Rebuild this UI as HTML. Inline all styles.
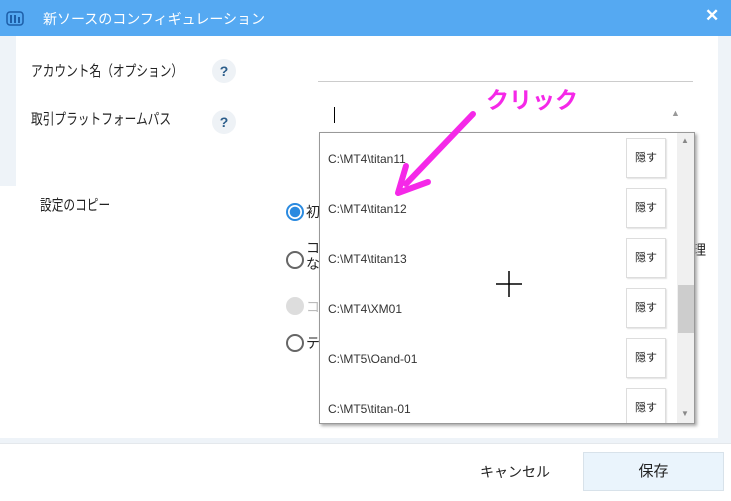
<!DOCTYPE html>
<html><head><meta charset="utf-8"><style>
*{margin:0;padding:0;box-sizing:border-box}
body{width:731px;height:501px;overflow:hidden;background:#eef3f8;font-family:"Liberation Sans","Noto Sans CJK JP",sans-serif;font-size:14px;color:#222;position:relative}
.a{position:absolute}
.title{left:0;top:0;width:731px;height:36px;background:#55a9f2;color:#fff}
.q{width:24px;height:24px;border-radius:12px;background:#eef2f6;color:#2b5d8a;font-weight:bold;font-size:14px;text-align:center;line-height:24px}
.radio{width:18px;height:18px;border-radius:50%;border:2px solid #666;background:#fff}
.item{left:8px;font-size:12px;color:#333}
.btn{left:306px;width:40px;height:40px;border:1px solid #ddd;background:#fff;font-size:11px;text-align:center;line-height:38px;box-shadow:1px 1px 1px #e4e4e4}
.lbl{font-size:15px;transform:scaleX(0.78);transform-origin:left;white-space:nowrap}
</style></head><body>
<div class="a title">
<svg class="a" style="left:6px;top:10px" width="18" height="16"><rect x="1" y="2" width="16" height="13" rx="3" fill="none" stroke="#1d5ea8" stroke-width="1.5"/><path d="M5 5v8M9 5v8M13 7v6" stroke="#1d5ea8" stroke-width="2"/></svg>
<div class="a" style="left:43px;top:9px;font-size:14px">新ソースのコンフィギュレーション</div>
<div class="a" style="left:705px;top:6px;font-size:17px;font-weight:bold">✕</div>
</div>
<div class="a" style="left:16px;top:36px;width:702px;height:150px;background:#fff"></div>
<div class="a" style="left:0;top:186px;width:718px;height:252px;background:#fff"></div>
<div class="a" style="left:0;top:443px;width:731px;height:58px;background:#fff;border-top:1px solid #e4e8ec"></div>
<div class="a lbl" style="left:31px;top:60px">アカウント名（オプション）</div>
<div class="a q" style="left:212px;top:59px">?</div>
<div class="a lbl" style="left:31px;top:108px">取引プラットフォームパス</div>
<div class="a q" style="left:212px;top:110px">?</div>
<div class="a" style="left:318px;top:81px;width:375px;height:1px;background:#ccc"></div>
<div class="a" style="left:334px;top:107px;width:1px;height:16px;background:#000"></div>
<div class="a" style="left:671px;top:108px;font-size:9px;color:#999">▲</div>
<div class="a lbl" style="left:40px;top:194px">設定のコピー</div>
<div class="a radio" style="left:286px;top:203px;border-color:#2a8ae0;background:radial-gradient(circle,#2a8ae0 0 5px,#fff 5.5px)"></div>
<div class="a" style="left:306px;top:202px">初</div>
<div class="a radio" style="left:286px;top:251px"></div>
<div class="a" style="left:306px;top:240px;line-height:16px">コ<br>な</div>
<div class="a radio" style="left:286px;top:297px;border-color:#ddd;background:#ddd"></div>
<div class="a" style="left:306px;top:297px;color:#bbb">コ</div>
<div class="a radio" style="left:286px;top:334px"></div>
<div class="a" style="left:306px;top:333px">テ</div>
<div class="a" style="left:692px;top:240px">理</div>
<div class="a" style="left:319px;top:132px;width:376px;height:292px;background:#fff;border:1px solid #999;box-shadow:2px 2px 3px #aaa;overflow:hidden">
<div class="a item" style="top:19px">C:\MT4\titan11</div>
<div class="a item" style="top:69px">C:\MT4\titan12</div>
<div class="a item" style="top:119px">C:\MT4\titan13</div>
<div class="a item" style="top:169px">C:\MT4\XM01</div>
<div class="a item" style="top:219px">C:\MT5\Oand-01</div>
<div class="a item" style="top:269px">C:\MT5\titan-01</div>
<div class="a btn" style="top:5px">隠す</div>
<div class="a btn" style="top:55px">隠す</div>
<div class="a btn" style="top:105px">隠す</div>
<div class="a btn" style="top:155px">隠す</div>
<div class="a btn" style="top:205px">隠す</div>
<div class="a btn" style="top:255px">隠す</div>
<div class="a" style="left:357px;top:0;width:18px;height:292px;background:#f0f0f0"></div>
<div class="a" style="left:358px;top:152px;width:16px;height:48px;background:#cdcdcd"></div>
<div class="a" style="left:361px;top:3px;font-size:8px;color:#888">▲</div>
<div class="a" style="left:361px;top:276px;font-size:8px;color:#888">▼</div>
<svg class="a" style="left:176px;top:138px" width="26" height="26"><path d="M13 0v26M0 13h26" stroke="#000" stroke-width="1.5"/></svg>
</div>
<div class="a" style="left:486px;top:81px;font-size:23px;font-weight:bold;color:#f528e8">クリック</div>
<svg class="a" style="left:390px;top:108px" width="100" height="90"><path d="M83 6L16 76" stroke="#f528e8" stroke-width="6" stroke-linecap="round"/><path d="M8 85L38 74M8 85L16 58" stroke="#f528e8" stroke-width="6" stroke-linecap="round"/></svg>
<div class="a" style="left:480px;top:462px;font-size:14px">キャンセル</div>
<div class="a" style="left:583px;top:452px;width:141px;height:39px;background:#eaf4fc;border:1px solid #d8e2ea;text-align:center;line-height:37px;font-size:15px">保存</div>
</body></html>
